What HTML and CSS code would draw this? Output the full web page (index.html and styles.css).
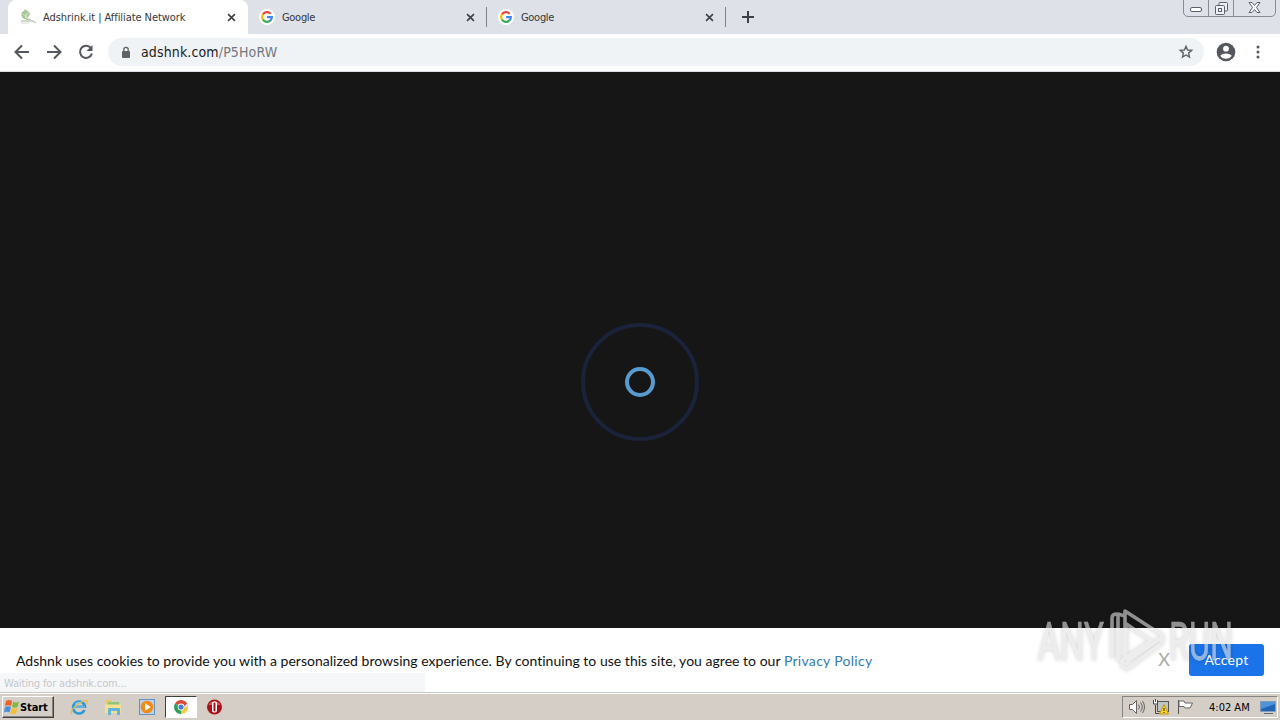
FILE: index.html
```html
<!DOCTYPE html>
<html lang="en">
<head>
    <meta charset="UTF-8">
    <meta name="viewport" content="width=device-width, initial-scale=1.0">
    <title>Adshrink.it | Affiliate Network</title>
    <link rel="stylesheet" href="styles.css">
</head>
<body>
    <svg class="defs" width="0" height="0">
        <symbol id="google" viewBox="0 0 16 16">
            <circle cx="8" cy="8" r="8" fill="#fff"/>
            <g fill="none" stroke-width="2.1">
                <path d="M3.9 5.4A4.9 4.9 0 0 1 11.6 4.7" stroke="#ea4335"/>
                <path d="M3.9 5.4A4.9 4.9 0 0 0 3.9 10.7" stroke="#fbbc05"/>
                <path d="M3.9 10.7A4.9 4.9 0 0 0 11.3 11.6" stroke="#34a853"/>
                <path d="M11.3 11.6Q12.8 10.3 12.9 8.1H8.1" stroke="#4285f4"/>
            </g>
        </symbol>
        <symbol id="close" viewBox="0 0 10 10">
            <path d="M1.2 1.2l7.6 7.6M8.8 1.2L1.2 8.8" stroke="#3c4043" stroke-width="1.8"/>
        </symbol>
    </svg>

    <header class="tab-strip">
        <div class="tab active">
            <svg class="favicon" viewBox="0 0 16 16">
                <path d="M2 3q2 0 3-3 2 2 3 2 3 2 1 5l-2 3H4Q0 7 2 3z" fill="#a9c795"/>
                <path d="M3 5q4 1 5 6M8 3L5 9" stroke="#dce9d2" fill="none"/>
                <path d="M1 12h12M6 11l3-1 2 1M13 12l3 2" stroke="#a5b39d" fill="none"/>
                <path d="M1 14h8" stroke="#d8ddd5"/>
            </svg>
            <span class="tab-title first">Adshrink.it | Affiliate Network</span>
            <svg class="tab-close"><use href="#close"/></svg>
        </div>
        <div class="tab">
            <svg class="favicon"><use href="#google"/></svg>
            <span class="tab-title">Google</span>
            <svg class="tab-close"><use href="#close"/></svg>
        </div>
        <div class="tab">
            <svg class="favicon"><use href="#google"/></svg>
            <span class="tab-title">Google</span>
            <svg class="tab-close"><use href="#close"/></svg>
        </div>
        <svg class="new-tab" viewBox="0 0 12 12"><path d="M6 0v12M0 6h12" stroke="#3c4043" stroke-width="2"/></svg>
        <div class="window-buttons">
            <span class="win-min"><svg width="13" height="6"><rect x=".5" y=".5" width="11" height="4" rx="1.5" fill="#fff" stroke="#5b616c"/></svg></span>
            <span class="win-restore"><svg width="13" height="13" fill="#eef0f4" stroke="#5b616c"><rect x="4" y=".5" width="8.5" height="8.5" rx="1"/><rect x=".5" y="3.5" width="9" height="9" rx="1"/><rect x="3.5" y="6.5" width="3" height="3"/></svg></span>
            <span class="win-close"><svg width="13" height="12"><path d="M1 .5h3l2.500 3 2.500-3h3L8.500 5.500l3.500 5H9L6.500 7.500 4 10.500H1l3.500-5z" fill="#fff" stroke="#5b616c"/></svg></span>
        </div>
    </header>

    <nav class="toolbar">
        <svg class="nav-icon" viewBox="0 0 16 16"><path d="M15 8H2M8 1.500L1.500 8 8 14.500"/></svg>
        <svg class="nav-icon" viewBox="0 0 16 16"><path d="M1 8h13M8 1.500L14.500 8 8 14.500"/></svg>
        <svg class="nav-icon" viewBox="0 0 16 16"><path d="M13.300 4.500A6.100 6.100 0 1 0 14 9.500"/><path d="M14.500 1v6h-6z" class="solid"/></svg>
        <div class="omnibox">
            <svg class="lock" viewBox="0 0 10 12"><rect x="1" y="4.500" width="8" height="7" rx="1" fill="#5f6368"/><path d="M2.800 5V3a2.200 2.200 0 0 1 4.400 0v2" fill="none" stroke="#5f6368" stroke-width="1.300"/></svg>
            <span class="url">adshnk.com<span class="path">/P5HoRW</span></span>
            <svg class="star" viewBox="0 0 16 16"><path d="M8 2.300l1.600 3.700 4.100.4-3.100 2.700.9 4L8 11l-3.500 2.100.9-4-3.100-2.700 4.100-.4z" fill="none" stroke="#5f6368" stroke-width="1.400"/></svg>
        </div>
        <svg class="profile" viewBox="0 0 20 20"><circle cx="10" cy="10" r="9.300" fill="#54575d"/><circle cx="10" cy="6.700" r="2.900" fill="#fff"/><path d="M4.200 13.800Q6 11.500 10 11.500t5.800 2.300Q14 16.800 10 16.800t-5.800-3z" fill="#fff"/></svg>
        <svg class="menu" viewBox="0 0 4 14"><g fill="#54575d"><circle cx="2" cy="2" r="1.500"/><circle cx="2" cy="7" r="1.500"/><circle cx="2" cy="12" r="1.500"/></g></svg>
    </nav>

    <main class="page">
        <div class="loader"><div class="loader-inner"></div></div>
    </main>

    <section class="cookie-bar">
        <p>Adshnk uses cookies to provide you with a personalized browsing experience. By continuing to use this site, you agree to our <a>Privacy Policy</a></p>
        <span class="dismiss">X</span>
        <button class="accept">Accept</button>
        <div class="status-bubble">Waiting for adshnk.com...</div>
        <svg class="watermark" viewBox="0 0 200 70">
            <text x="0" y="53.500" textLength="66" lengthAdjust="spacingAndGlyphs">ANY</text>
            <path d="M74 52V12q0-4 5-4M80 55V8l7 2v40M87 5l37 24v8L89 63l-5-3v-6l29-19-26-18zM88 17v30M89 55l34-23"/>
            <text x="131" y="53.500" textLength="64" lengthAdjust="spacingAndGlyphs">RUN</text>
        </svg>
    </section>

    <footer class="taskbar">
        <button class="start">
            <svg width="16" height="16" viewBox="0 0 16 16">
                <path d="M2 2q3-2 6 0L7 7Q4 5.500 1 7z" fill="#e8632c"/>
                <path d="M9 2.500q3 2 6 0L13.500 8q-3 1.500-5.500 0z" fill="#7fb93e"/>
                <path d="M1 8q3-1.500 6 0l-1.500 5.500Q3 12 0 13.500z" fill="#4a8fd8"/>
                <path d="M8 9q3 1.500 5.500 0L12 14.500q-3 1.500-5.500 0z" fill="#f5bf32"/>
            </svg>
            <span>Start</span>
        </button>
        <div class="quick-launch">
            <svg viewBox="0 0 18 18">
                <path d="M14.500 12A6 6 0 1 1 15 8.800H4.500" fill="none" stroke="#2f98d8" stroke-width="2.600"/>
                <path d="M4 9h11M5 6q3-3 7-1" stroke="#8dd0f2" fill="none"/>
                <path d="M2 16Q-1 13 8 6q8-5 9-3 .5 1-1 3" fill="none" stroke="#e5bd4a" stroke-width="1.300"/>
            </svg>
            <svg viewBox="0 0 18 18">
                <path d="M2 2h5l1 2h8v10H2z" fill="#e9c965"/>
                <path d="M4 4h11v4H4z" fill="#91c57b"/>
                <path d="M1 6.500h16V15H1z" fill="#f5df91"/>
                <path d="M4 17v-6q0-1 1-1h10q1 0 1 1v6h-3v-4H7v4z" fill="#61b5dc"/>
            </svg>
            <svg viewBox="0 0 18 18">
                <rect x="1.500" y="1.500" width="15" height="15" fill="#b9d3eb" stroke="#5f94c4"/>
                <circle cx="9" cy="9" r="6.300" fill="#f28a16"/><path d="M7 5.200v7.600L12.800 9z" fill="#fff"/>
            </svg>
            <span class="running">
                <svg viewBox="0 0 18 18">
                    <path d="M9 9L3 5.500a7 7 0 0 1 12.100 0z" fill="#df4936"/>
                    <path d="M9 9v7A7 7 0 0 1 3 5.500z" fill="#2b9d58"/>
                    <path d="M9 9h6.100V5.500A7 7 0 0 1 9 16z" fill="#f6c93e"/>
                    <path d="M9 5.500h6.100L12 9z" fill="#df4936"/>
                    <circle cx="9" cy="9" r="3.400" fill="#fff"/><circle cx="9" cy="9" r="2.600" fill="#4580d8"/>
                </svg>
            </span>
            <svg viewBox="0 0 18 18">
                <circle cx="8.500" cy="9" r="7.500" fill="#a81118"/><path d="M2.500 7a6.500 6 0 0 1 12 0z" fill="#d75357"/>
                <rect x="6" y="3.500" width="5" height="11" rx="2" fill="#fff"/><rect x="7.500" y="4.500" width="2" height="9" rx="1" fill="#a81118"/>
            </svg>
        </div>
        <div class="tray">
            <svg width="18" height="16" viewBox="0 0 18 16" fill="#fff" stroke="#66635f">
                <path d="M.5 5.500h3l4-4v13l-4-4h-3z"/><path d="M9.500 5.500q2 2.500 0 5M11.500 3.500q3.500 4.500 0 9M13.500 2q4 6 0 12" fill="none"/>
            </svg>
            <svg width="18" height="16" viewBox="0 0 18 16">
                <rect x="4.500" y="2.500" width="11" height="10" fill="#bfc4c5" stroke="#555"/><path d="M2.500 6v8.500h8" stroke="#444" fill="none"/>
                <path d="M.5 1v4h4V1M2.500 0v3" stroke="#444" fill="#fff"/><path d="M11 5.500l4.500 9.500h-9z" fill="#ffd426" stroke="#c19b0e"/><path d="M11 9v3M11 13v1" stroke="#222"/>
            </svg>
            <svg width="18" height="16" viewBox="0 0 18 16">
                <path d="M1.500 1v14" stroke="#555"/><path d="M2 2h5l1 2h7.500l-2.500 5H8l-1-1.500H2z" fill="#fff" stroke="#666"/>
            </svg>
            <time>4:02 AM</time>
            <svg width="16" height="15" viewBox="0 0 16 15">
                <path d="M.5 1.500h15v10H.5z" fill="#2464b4" stroke="#7d9dbd"/><path d="M1 2h14v2L1 9z" fill="#4e94da"/><path d="M4 13.500h9" stroke="#576c83"/>
            </svg>
        </div>
    </footer>
</body>
</html>
```
FILE: styles.css
```css
* {
    box-sizing: border-box;
}

body {
    margin: 0;
    width: 1280px;
    height: 720px;
    overflow: hidden;
    display: flex;
    flex-direction: column;
    font-family: "DejaVu Sans Condensed", "DejaVu Sans", sans-serif;
    background: #161616;
}

svg {
    display: block;
    flex: none;
}

.defs {
    position: absolute;
}

button {
    font-family: inherit;
    border: none;
    padding: 0;
}

.tab-strip {
    flex: none;
    display: flex;
    height: 34px;
    padding-left: 8px;
    background: #dee1e8;
}

.tab {
    display: flex;
    align-items: center;
    width: 239px;
    padding: 0 12px 0 11px;
    background: linear-gradient(#7e828a, #7e828a) right 7px / 1px 20px no-repeat;
}

.tab.active {
    width: 240px;
    padding: 0 12px;
    background: #fff;
    border-radius: 8px 8px 0 0;
}

.favicon {
    width: 16px;
    height: 16px;
    margin-right: 7px;
}

.tab-title {
    flex: 1;
    font-size: 11px;
    letter-spacing: -0.3px;
    color: #34373b;
    white-space: nowrap;
}

.tab-title.first {
    letter-spacing: -0.07px;
}

.tab-close {
    width: 9px;
    height: 9px;
}

.new-tab {
    width: 12px;
    height: 12px;
    margin: 11px 0 0 16px;
}

.window-buttons {
    display: flex;
    margin: -1px 4px 0 auto;
    height: 18px;
    border: 1px solid #878c97;
    border-radius: 0 0 5px 5px;
}

.window-buttons span {
    display: flex;
    justify-content: center;
    align-items: center;
    width: 25px;
    border-right: 1px solid #878c97;
}

.window-buttons .win-min {
    padding-top: 4px;
}

.window-buttons .win-close {
    width: 41px;
    border: none;
}

.toolbar {
    flex: none;
    display: flex;
    align-items: center;
    height: 38px;
    padding: 0 20px 1px 14px;
    background: #fff;
    border-bottom: 1px solid #dcdee1;
}

.nav-icon {
    width: 16px;
    height: 16px;
    margin-right: 16px;
    fill: none;
    stroke: #54575d;
    stroke-width: 2;
}

.nav-icon .solid {
    fill: #54575d;
    stroke: none;
}

.omnibox {
    flex: 1;
    display: flex;
    align-items: center;
    height: 28px;
    margin-left: -2px;
    padding: 0 10px 0 13px;
    border-radius: 14px;
    background: #f0f3f6;
}

.lock {
    width: 10px;
    height: 13px;
    margin-right: 10px;
}

.url {
    flex: 1;
    font-size: 14px;
    letter-spacing: 0.13px;
    color: #202124;
}

.url .path {
    color: #73777c;
}

.star {
    width: 16px;
    height: 16px;
}

.profile {
    width: 20px;
    height: 20px;
    margin: 0 20px 0 12px;
}

.menu {
    width: 4px;
    height: 14px;
}

.page {
    flex: 1;
    display: flex;
    align-items: center;
    justify-content: center;
    padding-top: 64px;
}

.loader {
    display: flex;
    align-items: center;
    justify-content: center;
    width: 118px;
    height: 118px;
    border: 4px solid #1b233b;
    border-radius: 50%;
}

.loader-inner {
    width: 30px;
    height: 30px;
    border: 4px solid #579bd1;
    border-radius: 50%;
}

.cookie-bar {
    position: relative;
    flex: none;
    display: flex;
    align-items: center;
    height: 64px;
    padding: 0 16px;
    background: #fff;
    font-family: Lato, sans-serif;
    font-size: 14px;
    color: #111;
}

.cookie-bar p {
    flex: 1;
    margin: 0;
    letter-spacing: 0.02px;
}

.cookie-bar a {
    letter-spacing: 0.3px;
    color: #337ab7;
}

.dismiss {
    margin: -3px 19px 0 0;
    font-size: 18px;
    color: #aaa;
}

.accept {
    width: 75px;
    height: 32px;
    padding-bottom: 2px;
    border-radius: 3px;
    background: #1a73e8;
    color: #fff;
    font-size: 14px;
    letter-spacing: 0.2px;
}

.status-bubble {
    position: absolute;
    left: 0;
    bottom: 0;
    width: 425px;
    height: 19px;
    padding-left: 4px;
    background: #f5f7f9;
    font: 11px/21px "DejaVu Sans Condensed", sans-serif;
    letter-spacing: -0.16px;
    color: #c5c7ca;
}

.watermark {
    position: absolute;
    left: 1038px;
    top: -22px;
    width: 200px;
    height: 70px;
    filter: drop-shadow(0 0 2px rgba(0, 0, 0, 0.3));
    opacity: 0.6;
}

.watermark text {
    font: 53px Roboto, sans-serif;
    fill: #e2e2e2;
    stroke: #e2e2e2;
    stroke-width: 0.6;
}

.watermark path {
    fill: none;
    stroke: #e2e2e2;
    stroke-width: 3.6;
    stroke-linejoin: round;
}

.taskbar {
    flex: none;
    display: flex;
    align-items: flex-start;
    height: 28px;
    padding: 4px 2px 0;
    background: #d5cec7;
    border-top: 1px solid #cbcac6;
    box-shadow: inset 0 1px #fff;
}

.start {
    display: flex;
    align-items: center;
    width: 52px;
    height: 22px;
    margin-top: -1px;
    padding-left: 1px;
    background: #d5cec7;
    border: 1px solid;
    border-color: #fff #404040 #404040 #fff;
    box-shadow: inset -1px -1px #88847f;
    font-size: 11px;
    font-weight: bold;
    letter-spacing: -0.1px;
}

.quick-launch {
    display: flex;
    align-items: center;
    gap: 16px;
    height: 22px;
    margin: -1px 0 0 16px;
}

.quick-launch svg {
    width: 18px;
    height: 18px;
}

.running {
    display: flex;
    align-items: center;
    justify-content: center;
    width: 32px;
    height: 22px;
    margin: 0 -7px;
    background: #fff;
    border: 1px solid;
    border-color: #404040 #fff #fff #404040;
}

.tray {
    display: flex;
    align-items: center;
    height: 22px;
    width: 156px;
    margin: -1px 0 0 auto;
    padding-left: 6px;
    border: 1px solid;
    border-color: #88847f #fff #fff #88847f;
}

.tray svg {
    margin-right: 6px;
}

.tray time {
    margin: 0 10px 0 8px;
    font-size: 11px;
    letter-spacing: 0;
    white-space: nowrap;
}
```
